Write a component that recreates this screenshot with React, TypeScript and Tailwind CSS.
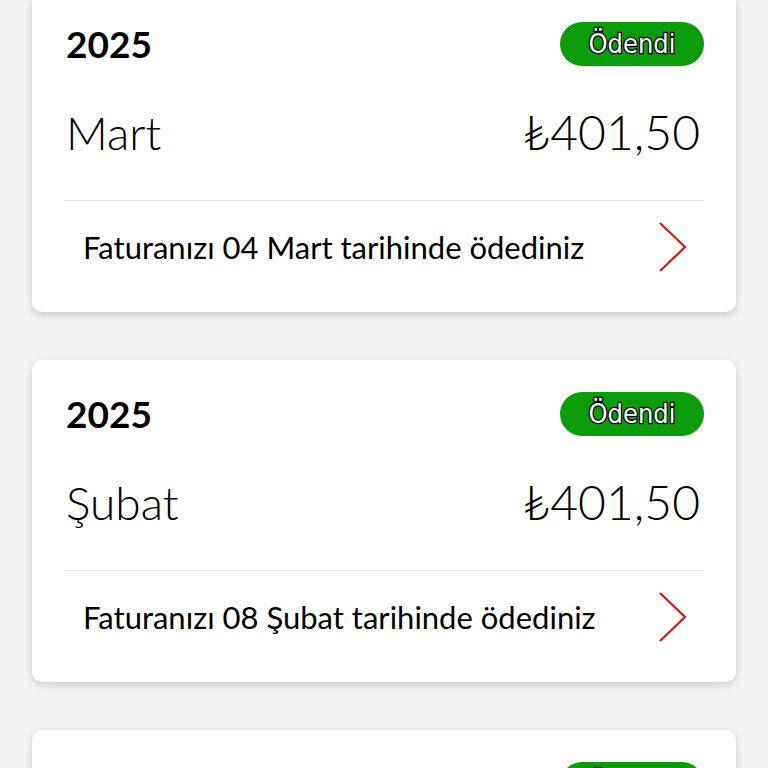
const bills = [
  { year: "2025", month: "Mart", amount: "₺401,50", note: "Faturanızı 04 Mart tarihinde ödediniz" },
  { year: "2025", month: "Şubat", amount: "₺401,50", note: "Faturanızı 08 Şubat tarihinde ödediniz" },
  { year: "2025", month: "Ocak", amount: "₺401,50", note: "Faturanızı 06 Ocak tarihinde ödediniz" },
];

function Chevron() {
  return (
    <svg width="30" height="52" viewBox="0 0 30 52" fill="none">
      <polyline points="2,2 27,26 2,50" stroke="#d21a1a" strokeWidth="2.2" />
    </svg>
  );
}

function BillCard({ year, month, amount, note }: (typeof bills)[number]) {
  return (
    <div className="bg-white rounded-[10px] shadow-[0_3px_8px_rgba(0,0,0,0.18)] px-8 pt-8 pb-[35px]">
      <div className="flex items-center justify-between h-11">
        <span className="text-[37px] font-bold text-black pl-0.5">{year}</span>
        <span className="h-11 w-[144px] rounded-full bg-[#0b9b0b] flex items-center justify-center text-[27px] text-white font-['DejaVu_Sans',sans-serif] font-stretch-condensed [-webkit-text-stroke:2.5px_#000] [paint-order:stroke_fill]">
          Ödendi
        </span>
      </div>
      <div className="flex items-center justify-between h-[60px] mt-9">
        <span className="text-[46px] font-light text-black pl-0.5">{month}</span>
        <span className="text-[48px] font-light text-black pr-1">{amount}</span>
      </div>
      <div className="h-px bg-[#e4e4e4] mt-[38px]" />
      <div className="flex items-center justify-between h-[60px] mt-4 pl-[19px] pr-4">
        <span className="text-[31px] text-black">{note}</span>
        <Chevron />
      </div>
    </div>
  );
}

export default function App() {
  return (
    <div className="h-[768px] overflow-hidden bg-[#f4f4f4] px-8 font-['Lato','Open_Sans',sans-serif]">
      <div className="flex flex-col gap-12 -mt-[10px]">
        {bills.map((b, i) => (
          <BillCard key={i} {...b} />
        ))}
      </div>
    </div>
  );
}
